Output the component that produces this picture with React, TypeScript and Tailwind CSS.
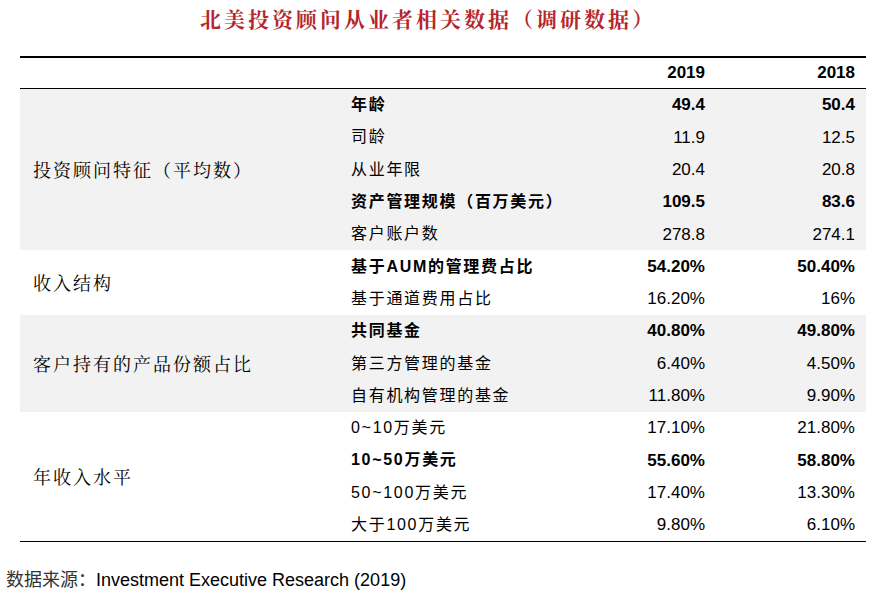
import React from 'react'

type Row = { label: string; v19: string; v18: string; bold?: boolean }
type Group = { title: string; gray: boolean; rows: Row[] }

const groups: Group[] = [
  {
    title: '投资顾问特征（平均数）',
    gray: true,
    rows: [
      { label: '年龄', v19: '49.4', v18: '50.4', bold: true },
      { label: '司龄', v19: '11.9', v18: '12.5' },
      { label: '从业年限', v19: '20.4', v18: '20.8' },
      { label: '资产管理规模（百万美元）', v19: '109.5', v18: '83.6', bold: true },
      { label: '客户账户数', v19: '278.8', v18: '274.1' },
    ],
  },
  {
    title: '收入结构',
    gray: false,
    rows: [
      { label: '基于AUM的管理费占比', v19: '54.20%', v18: '50.40%', bold: true },
      { label: '基于通道费用占比', v19: '16.20%', v18: '16%' },
    ],
  },
  {
    title: '客户持有的产品份额占比',
    gray: true,
    rows: [
      { label: '共同基金', v19: '40.80%', v18: '49.80%', bold: true },
      { label: '第三方管理的基金', v19: '6.40%', v18: '4.50%' },
      { label: '自有机构管理的基金', v19: '11.80%', v18: '9.90%' },
    ],
  },
  {
    title: '年收入水平',
    gray: false,
    rows: [
      { label: '0~10万美元', v19: '17.10%', v18: '21.80%' },
      { label: '10~50万美元', v19: '55.60%', v18: '58.80%', bold: true },
      { label: '50~100万美元', v19: '17.40%', v18: '13.30%' },
      { label: '大于100万美元', v19: '9.80%', v18: '6.10%' },
    ],
  },
]

const cjk = "font-['Noto_Serif_CJK_SC','Noto_Sans_CJK_SC',serif]"
const num = "font-['Liberation_Sans','Noto_Sans_CJK_SC',sans-serif]"

const App = () => {
  return (
    <div className={`w-[872px] h-[594px] bg-white text-black ${num}`}>
      <div className="h-[38px] flex items-center justify-center pr-[16px]">
        <h1 className={`${cjk} text-[21px] font-bold tracking-[3px] text-[#b5262b]`}>
          北美投资顾问从业者相关数据（调研数据）
        </h1>
      </div>

      <div className="ml-[20px] w-[846px] mt-[18px] border-t-[2px] border-black">
        <div className="flex h-[31px] items-center border-b border-black text-[17px] font-bold">
          <div className="w-[330px]" />
          <div className="w-[235px]" />
          <div className="w-[120px] text-right">2019</div>
          <div className="w-[150px] text-right">2018</div>
        </div>

        {groups.map((group) => (
          <div key={group.title} className={`flex ${group.gray ? 'bg-[#f2f2f2]' : 'bg-white'}`}>
            <div className={`w-[330px] flex items-center pl-[13px] text-[18px] tracking-[2px] ${cjk}`}>
              {group.title}
            </div>
            <div className="flex-1">
              {group.rows.map((row) => (
                <div
                  key={row.label}
                  className={`flex h-[32.3px] items-center text-[17px] ${row.bold ? 'font-bold' : ''}`}
                >
                  <div className={`w-[235px] pl-[1px] text-[16px] tracking-[1.7px] ${num}`}>{row.label}</div>
                  <div className="w-[120px] text-right">{row.v19}</div>
                  <div className="w-[150px] text-right">{row.v18}</div>
                </div>
              ))}
            </div>
          </div>
        ))}
        <div className="border-t-[1.5px] border-black" />
      </div>

      <div className="mt-[25px] pl-[6px] text-[18px]">
        <span className="text-[#333]">数据来源：</span>Investment Executive Research (2019)
      </div>
    </div>
  )
}

export default App
